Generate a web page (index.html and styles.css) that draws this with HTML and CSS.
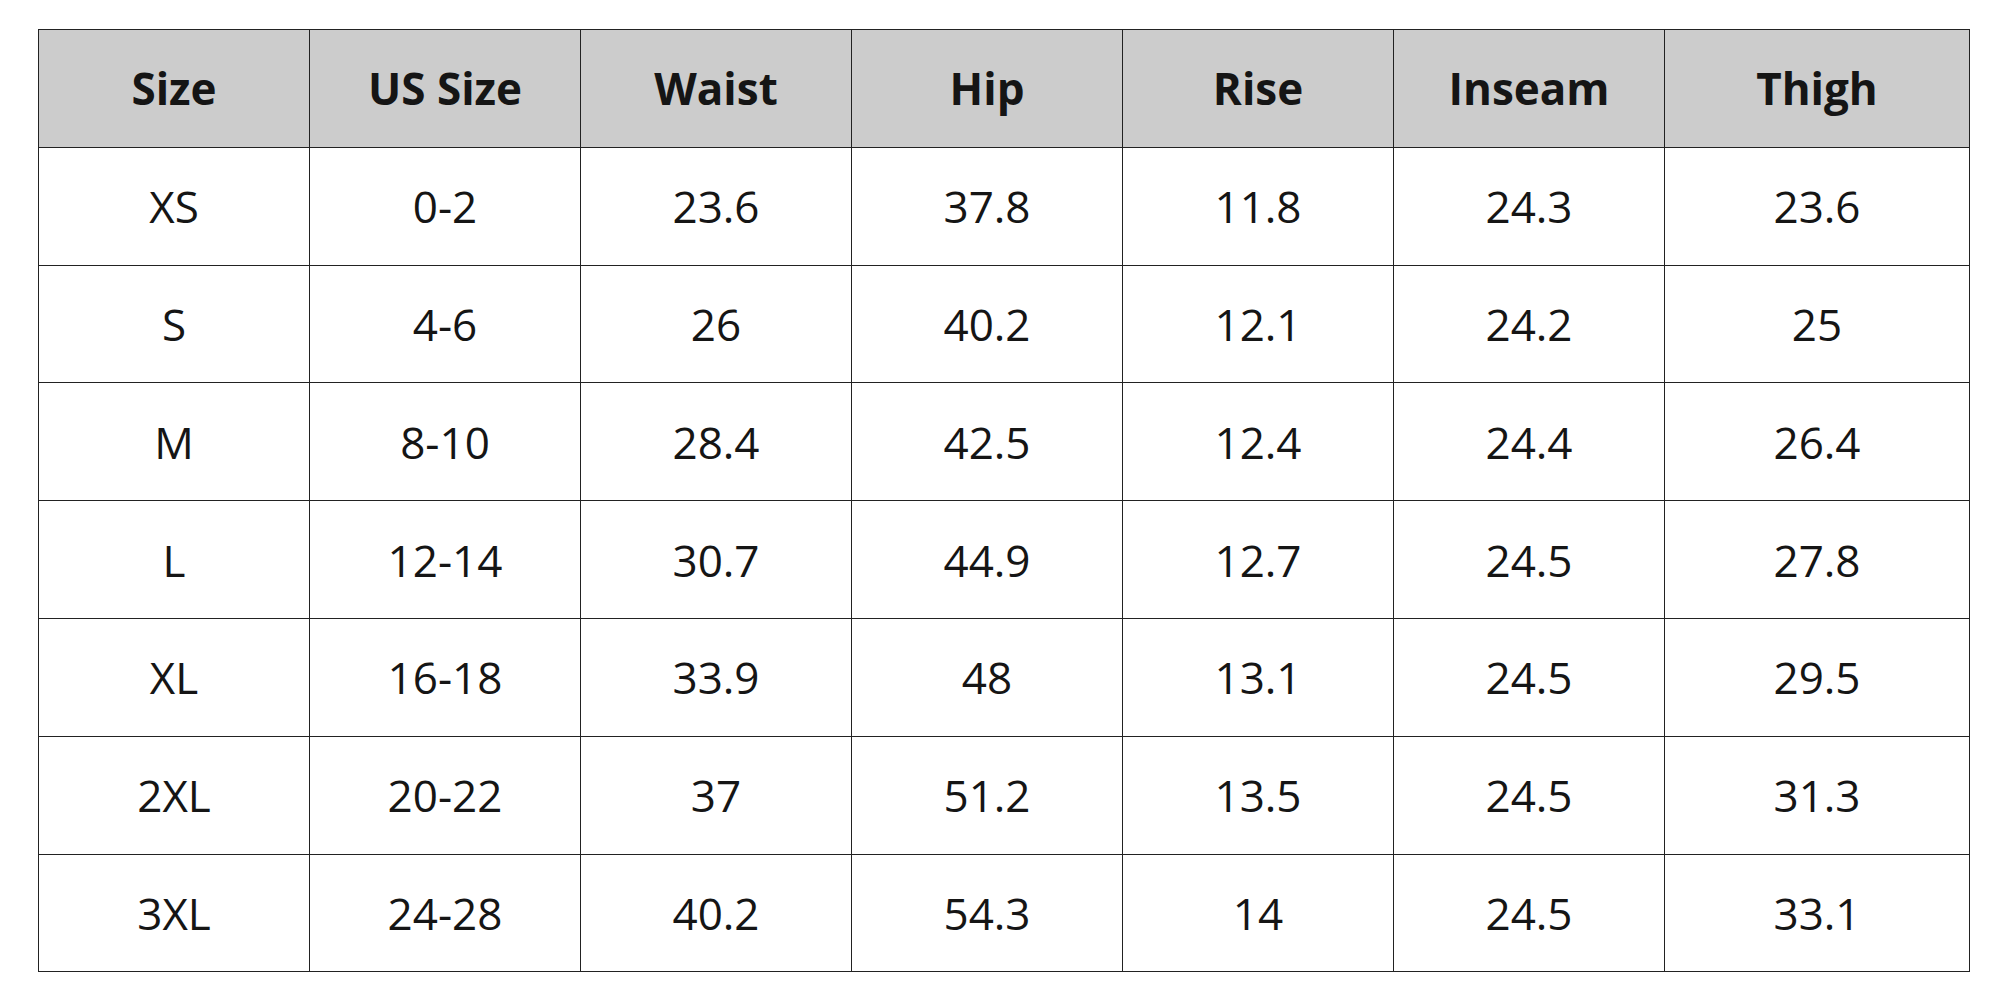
FILE: index.html
```html
<!DOCTYPE html>
<html>
<head>
<meta charset="utf-8">
<link rel="stylesheet" href="styles.css">
</head>
<body>
<table class="chart">
<colgroup>
<col class="c"><col class="c"><col class="c"><col class="c"><col class="c"><col class="c"><col class="c-last">
</colgroup>
<thead>
<tr><th>Size</th><th>US Size</th><th>Waist</th><th>Hip</th><th>Rise</th><th>Inseam</th><th>Thigh</th></tr>
</thead>
<tbody>
<tr><td>XS</td><td>0-2</td><td>23.6</td><td>37.8</td><td>11.8</td><td>24.3</td><td>23.6</td></tr>
<tr><td>S</td><td>4-6</td><td>26</td><td>40.2</td><td>12.1</td><td>24.2</td><td>25</td></tr>
<tr><td>M</td><td>8-10</td><td>28.4</td><td>42.5</td><td>12.4</td><td>24.4</td><td>26.4</td></tr>
<tr><td>L</td><td>12-14</td><td>30.7</td><td>44.9</td><td>12.7</td><td>24.5</td><td>27.8</td></tr>
<tr><td>XL</td><td>16-18</td><td>33.9</td><td>48</td><td>13.1</td><td>24.5</td><td>29.5</td></tr>
<tr><td>2XL</td><td>20-22</td><td>37</td><td>51.2</td><td>13.5</td><td>24.5</td><td>31.3</td></tr>
<tr><td>3XL</td><td>24-28</td><td>40.2</td><td>54.3</td><td>14</td><td>24.5</td><td>33.1</td></tr>
</tbody>
</table>
</body>
</html>
```
FILE: styles.css
```css
html, body {
  margin: 0;
  padding: 0;
  background: #ffffff;
}
body {
  padding: 29px 0 0 38px;
  font-family: "Open Sans", "Liberation Sans", sans-serif;
  color: #151515;
}
.chart {
  border-collapse: collapse;
  table-layout: fixed;
  width: 1931px;
}
.c { width: 271px; }
.c-last { width: 305px; }
.chart th, .chart td {
  border: 1.5px solid #222222;
  height: 116.8px;
  padding: 0;
  text-align: center;
  vertical-align: middle;
  font-size: 44px;
  line-height: 1;
}
.chart th {
  background: #cccccc;
  font-weight: 700;
}
.chart td {
  font-weight: 400;
}
```
